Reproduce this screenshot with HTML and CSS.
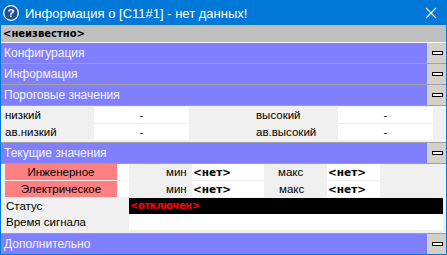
FILE: index.html
```html
<!DOCTYPE html>
<html>
<head>
<meta charset="utf-8">
<link rel="stylesheet" href="styles.css">
</head>
<body>
<div class="window">
  <div class="titlebar">
    <svg class="ticon" width="16" height="16" viewBox="0 0 16 16">
      <circle cx="8" cy="8" r="7.3" fill="#1f4e9a" stroke="#ffffff" stroke-width="1.3"/>
      <text x="8" y="12.3" text-anchor="middle" font-family="Liberation Sans, sans-serif" font-weight="bold" font-size="11.5" fill="#ffffff">?</text>
    </svg>
    <span class="title">Информация о [C11#1] - нет данных!</span>
    <svg class="close" width="12" height="12" viewBox="0 0 12 12">
      <path d="M1 1 L11 11 M11 1 L1 11" stroke="#ffffff" stroke-width="1.1" fill="none"/>
    </svg>
  </div>
  <div class="content">
    <div class="unknown">&lt;неизвестно&gt;</div>
    <div class="hdr"><span class="htext">Конфигурация</span><span class="tog"><i></i></span></div>
    <div class="hdr"><span class="htext">Информация</span><span class="tog"><i></i></span></div>
    <div class="hdr"><span class="htext">Пороговые значения</span><span class="tog"><i></i></span></div>
    <div class="panel thresh">
      <div class="trow">
        <span class="lbl">низкий</span><span class="val">-</span>
        <span class="lbl2">высокий</span><span class="val">-</span>
      </div>
      <div class="trow">
        <span class="lbl">ав.низкий</span><span class="val">-</span>
        <span class="lbl2">ав.высокий</span><span class="val">-</span>
      </div>
    </div>
    <div class="hdr"><span class="htext">Текущие значения</span><span class="tog"><i></i></span></div>
    <div class="panel current">
      <div class="crow">
        <span class="pink">Инженерное</span><span class="w"></span>
        <span class="mn">мин</span><span class="w b">&lt;нет&gt;</span>
        <span class="mx">макс</span><span class="w b">&lt;нет&gt;</span>
      </div>
      <div class="crow gap">
        <span class="pink">Электрическое</span><span class="w"></span>
        <span class="mn">мин</span><span class="w b">&lt;нет&gt;</span>
        <span class="mx mx2">макс</span><span class="w b">&lt;нет&gt;</span>
      </div>
      <div class="crow gap">
        <span class="slbl">Статус</span><span class="black">&lt;отключен&gt;</span>
      </div>
      <div class="crow">
        <span class="slbl">Время сигнала</span><span class="wide"></span>
      </div>
    </div>
    <div class="hdr last"><span class="htext">Дополнительно</span><span class="tog"><i></i></span></div>
  </div>
</div>
</body>
</html>
```
FILE: styles.css
```css
* { box-sizing: border-box; }
html, body { margin: 0; padding: 0; background: #ffffff; }
.window {
  width: 447px;
  height: 255px;
  display: flex;
  flex-direction: column;
  background: #f0f0f0;
  border: 1px solid #0078d7;
  border-top: 0;
  overflow: hidden;
}
.titlebar {
  height: 25px;
  margin: 0 -1px;
  background: #0078d7;
  display: flex;
  align-items: center;
  padding-left: 3px;
  padding-top: 5px;
  padding-bottom: 4px;
}
.ticon { flex: none; }
.title {
  margin-left: 6px;
  color: #ffffff;
  font-family: "Liberation Sans", sans-serif;
  font-size: 13px;
  flex: 1;
  white-space: nowrap;
}
.close { flex: none; margin-right: 10px; }
.content { display: flex; flex-direction: column; }
.unknown {
  height: 18px;
  background: #c0c0c0;
  border-bottom: 1px solid #ffffff;
  font-family: "DejaVu Sans", sans-serif;
  font-weight: bold;
  font-size: 10px;
  line-height: 17px;
  padding-left: 2px;
  color: #000000;
}
.hdr {
  height: 21px;
  display: flex;
  background: #8080ff;
  border-bottom: 1px solid #a0a0a0;
}
.hdr.last { border-bottom: 0; height: 20px; }
.htext {
  flex: 1;
  color: #f4f4ff;
  font-family: "Liberation Sans", sans-serif;
  font-size: 12px;
  line-height: 20px;
  padding-left: 3px;
}
.tog {
  width: 19px;
  background: #d4d0c8;
  display: flex;
  align-items: center;
  justify-content: center;
}
.tog i {
  display: block;
  width: 11px;
  height: 4px;
  border: 1px solid #000000;
  background: #ffffff;
  margin-left: 1px;
}
.panel {
  background: #f0f0f0;
  font-family: "Liberation Sans", sans-serif;
  font-size: 11.5px;
  color: #000000;
}
.thresh {
  height: 37px;
  padding-top: 1px;
  border-bottom: 1px solid #a0a0a0;
  display: flex;
  flex-direction: column;
  gap: 1px;
}
.trow {
  display: grid;
  grid-template-columns: 93px 95px 149px 95px;
  height: 16px;
  line-height: 16px;
}
.lbl { padding-left: 4px; }
.lbl2 { padding-left: 67px; }
.val { background: #ffffff; text-align: center; }
.current {
  height: 70px;
  border-bottom: 1px solid #a0a0a0;
  display: flex;
  flex-direction: column;
}
.crow {
  display: grid;
  grid-template-columns: 4px 112px 12px 63px 72px 63px 53px 58px 5px 1fr;
  height: 16px;
  line-height: 16px;
}
.crow.gap { margin-top: 1px; }
.pink { grid-column: 2; background: #ff8080; text-align: center; }
.w { background: #ffffff; }
.mn { padding-left: 37px; }
.mx { padding-left: 14px; }
.mx2 { padding-left: 15px; }
.b {
  font-family: "DejaVu Sans", sans-serif;
  font-weight: bold;
  font-size: 10.5px;
  padding-left: 1px;
}
.slbl { grid-column: 2 / 4; padding-left: 1px; white-space: nowrap; }
.black {
  grid-column: 4 / 10;
  background: #000000;
  color: #ff0000;
  font-family: "DejaVu Sans", sans-serif;
  font-weight: bold;
  font-size: 10px;
  letter-spacing: -0.4px;
  padding-left: 1px;
}
.wide { grid-column: 4 / 10; background: #ffffff; }
```
